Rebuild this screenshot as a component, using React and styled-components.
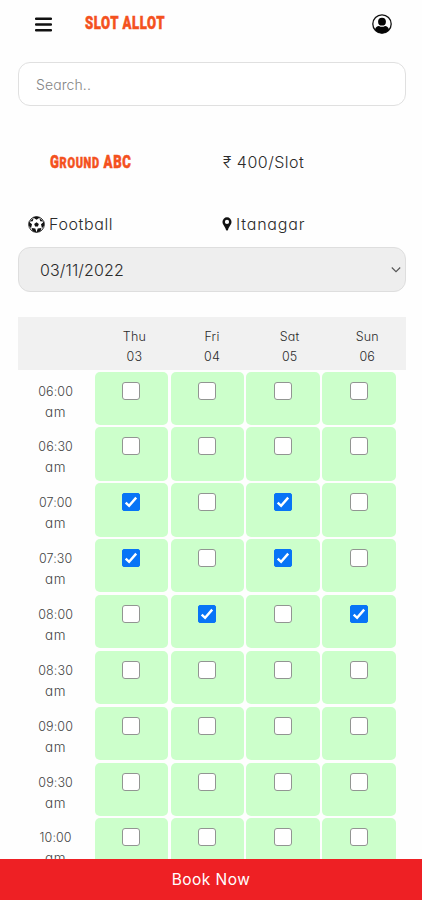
import React, { useState } from "react";
import styled, { createGlobalStyle } from "styled-components";

const GlobalStyle = createGlobalStyle`
  *, *::before, *::after { box-sizing: border-box; }
  body {
    margin: 0;
    background: #fefefe;
    color: #2b2b2b;
    font-family: Inter, "Noto Sans", sans-serif;
    font-feature-settings: "cv11";
    font-weight: 350;
  }
`;

const Page = styled.div`
  display: flex;
  flex-direction: column;
  height: 900px;
  overflow: hidden;
`;

const Header = styled.header`
  flex: none;
  display: flex;
  align-items: center;
  height: 46px;
  padding: 0 30px 0 35px;
`;

const MenuIcon = styled.svg`
  width: 17px;
  height: 15px;
  margin-top: 2px;
`;

const UserIcon = styled.svg`
  width: 20px;
  height: 20px;
  margin: 2px 0 0 auto;
`;

const Display = styled.span`
  display: inline-block;
  color: #f4511e;
  font-family: Roboto, "Liberation Sans", sans-serif;
  font-weight: 900;
  font-size: 18px;
  line-height: 20px;
  letter-spacing: ${(p) => p.$track}px;
  -webkit-text-stroke: 0.5px #f4511e;
  white-space: nowrap;
  transform-origin: 0 50%;
  transform: scaleX(0.73);
  small { font-size: 15px; }
`;

const Brand = styled.h1`
  width: 80px;
  height: 20px;
  margin: -1px 0 0 33px;
  font-size: 18px;
  line-height: 20px;
`;

const Main = styled.main`
  flex: 1;
  min-height: 0;
  overflow: hidden;
  padding: 16px 16px 0 18px;
`;

const Search = styled.input`
  display: block;
  width: 100%;
  height: 44px;
  padding: 0 17px;
  border: 1px solid #e0e0e0;
  border-radius: 12px;
  outline: none;
  background: #fff;
  color: #777;
  font: inherit;
  font-feature-settings: inherit;
  font-size: 14px;
  letter-spacing: 0.1px;
  &::placeholder { color: #858585; opacity: 1; }
`;

const Details = styled.section`
  display: grid;
  grid-template-columns: 204px 1fr;
  grid-template-rows: 24px 24px;
  row-gap: 38px;
  margin-top: 44px;
  height: 97px;
  font-size: 16px;
  line-height: 24px;
`;

const Detail = styled.div`
  display: flex;
  align-items: center;
  padding-left: ${(p) => p.$indent || 0}px;
  gap: ${(p) => p.$gap || 0}px;
  letter-spacing: ${(p) => p.$track || 0}px;
  white-space: nowrap;
`;

const Glyph = styled.svg`
  flex: none;
  width: ${(p) => p.$w}px;
  height: ${(p) => p.$h}px;
`;

const DateSelect = styled.button`
  display: flex;
  align-items: center;
  justify-content: space-between;
  width: 100%;
  height: 45px;
  padding: 0 4px 0 21px;
  border: 1px solid #dedede;
  border-radius: 12px;
  background: #eee;
  color: inherit;
  font: inherit;
  font-size: 16px;
  letter-spacing: 0.12px;
`;

const DayHeader = styled.div`
  display: grid;
  grid-template-columns: repeat(5, 1fr);
  height: 53px;
  margin-top: 25px;
  padding: 10px 0 0 0;
  background: #f1f1f1;
  text-align: center;
  font-size: 12.5px;
  line-height: 19.5px;
  letter-spacing: 0.15px;
`;

const Day = styled.div`
  white-space: pre-line;
`;

const Slots = styled.div`
  display: grid;
  grid-template-columns: 74.3px repeat(4, 73.5px);
  grid-auto-rows: 53.35px;
  gap: 2.5px 2.4px;
  padding-top: 1.6px;
`;

const Time = styled.div`
  padding: 10px 0 0 1px;
  text-align: center;
  white-space: pre-line;
  font-size: 12.5px;
  line-height: 20px;
  letter-spacing: 0.1px;
  color: #444;
`;

const Meridiem = styled.span`
  font-size: 13.5px;
  letter-spacing: 0.8px;
`;

const Slot = styled.label`
  display: flex;
  justify-content: center;
  align-items: flex-start;
  padding-top: 10px;
  border-radius: 5px;
  background: #ccffcb;
`;

const Box = styled.span`
  display: grid;
  place-items: center;
  width: 18px;
  height: 18px;
  border: 1px solid ${(p) => (p.$on ? "#0874f6" : "#929592")};
  border-radius: ${(p) => (p.$on ? 2 : 3)}px;
  background: ${(p) => (p.$on ? "#0874f6" : "#fff")};
`;

const HiddenInput = styled.input`
  display: none;
`;

const BookButton = styled.button`
  flex: none;
  height: 41px;
  border: 0;
  background: #ee2024;
  color: #fff;
  font: inherit;
  font-feature-settings: inherit;
  font-size: 15.5px;
  font-weight: 400;
  letter-spacing: 0.45px;
`;

const days = ["Thu\n03", "Fri\n04", "Sat\n05", "Sun\n06"];
const times = ["06:00", "06:30", "07:00", "07:30", "08:00", "08:30", "09:00", "09:30", "10:00"];
const initial = ["2-0", "2-2", "3-0", "3-2", "4-1", "4-3"];

export default function App() {
  const [picked, setPicked] = useState(new Set(initial));
  const toggle = (key) =>
    setPicked((prev) => {
      const next = new Set(prev);
      next.has(key) ? next.delete(key) : next.add(key);
      return next;
    });

  return (
    <Page>
      <GlobalStyle />
      <Header>
        <MenuIcon viewBox="0 0 17 15">
          <path d="M1 1.8h15M1 7.5h15M1 13.2h15" stroke="#111" strokeWidth="2.4" strokeLinecap="round" />
        </MenuIcon>
        <Brand><Display $track={0.8}>SLOT ALLOT</Display></Brand>
        <UserIcon viewBox="0 0 20 20">
          <circle cx="10" cy="10" r="9.2" fill="#fff" stroke="#111" strokeWidth="1.3" />
          <circle cx="10" cy="7.7" r="3.9" fill="#050505" />
          <path d="M3 15.5C3.6 13 5 12 7 11.9c1.8 1.2 4.2 1.2 6 0 2 .1 3.4 1.1 4 3.6A9 9 0 0 1 10 19.4a9 9 0 0 1-7-3.9Z" fill="#050505" />
        </UserIcon>
      </Header>
      <Main>
        <Search placeholder="Search.." />
        <Details>
          <Detail $indent={32}>
            <Display $track={0.9}>G<small>ROUND</small> ABC</Display>
          </Detail>
          <Detail $track={0.5} $indent={1}>₹ 400/Slot</Detail>
          <Detail $indent={10} $gap={4} $track={0.6}>
            <Glyph $w={17} $h={17} viewBox="0 0 17 17">
              <circle cx="8.5" cy="8.5" r="7.8" fill="#fff" stroke="#111" strokeWidth="0.9" />
              <path d="m8.5 6.2 2.3 1.7-.9 2.7H7.1l-.9-2.7Z" fill="#111" />
              <path d="M4.8 1.3 8.5 3.7l3.7-2.4L8.5.5ZM16.2 5.6 13 8.3l1 4 2.2-2.8ZM13.4 12.1l-3.7.5-1.2 3.8 3.9-1.2ZM.8 5.6 4 8.3l-1 4L.8 9.5ZM3.6 12.1l3.7.5 1.2 3.8-3.9-1.2ZM1.5 5.4l3.2-.1 1-3.2ZM15.5 5.4l-3.2-.1-1-3.2Z" fill="#111" />
            </Glyph>
            Football
          </Detail>
          <Detail $gap={4} $track={0.8}>
            <Glyph $w={10} $h={14} viewBox="0 0 10 14">
              <path fillRule="evenodd" d="M5 .3A4.5 4.5 0 0 0 .5 4.9C.5 7.8 3.3 9.3 4 13q1 1.2 2 0c.7-3.7 3.5-5.2 3.5-8.1A4.5 4.5 0 0 0 5 .3Zm0 2.5a2.1 2.1 0 1 1 0 4.2 2.1 2.1 0 0 1 0-4.2Z" fill="#111" />
            </Glyph>
            Itanagar
          </Detail>
        </Details>
        <DateSelect>
          03/11/2022
          <Glyph $w={10} $h={7} viewBox="0 0 10 7">
            <path d="m.8 1.5 4.2 4.2 4.2-4.2" fill="none" stroke="#555" strokeWidth="1.1" />
          </Glyph>
        </DateSelect>
        <DayHeader>
          <span />
          {days.map((d) => <Day key={d}>{d}</Day>)}
        </DayHeader>
        <Slots>
          {times.map((time, row) => (
            <React.Fragment key={time}>
              <Time>{time + "\n"}<Meridiem>am</Meridiem></Time>
              {days.map((d, col) => {
                const key = `${row}-${col}`;
                const on = picked.has(key);
                return (
                  <Slot key={key}>
                    <HiddenInput type="checkbox" checked={on} onChange={() => toggle(key)} />
                    <Box $on={on}>
                      {on && (
                        <Glyph $w={14} $h={14} viewBox="0 0 14 14">
                          <path d="m1.7 7.6 3.4 3.2L12.2 2.6" fill="none" stroke="#fff" strokeWidth="2.4" />
                        </Glyph>
                      )}
                    </Box>
                  </Slot>
                );
              })}
            </React.Fragment>
          ))}
        </Slots>
      </Main>
      <BookButton>Book Now</BookButton>
    </Page>
  );
}
